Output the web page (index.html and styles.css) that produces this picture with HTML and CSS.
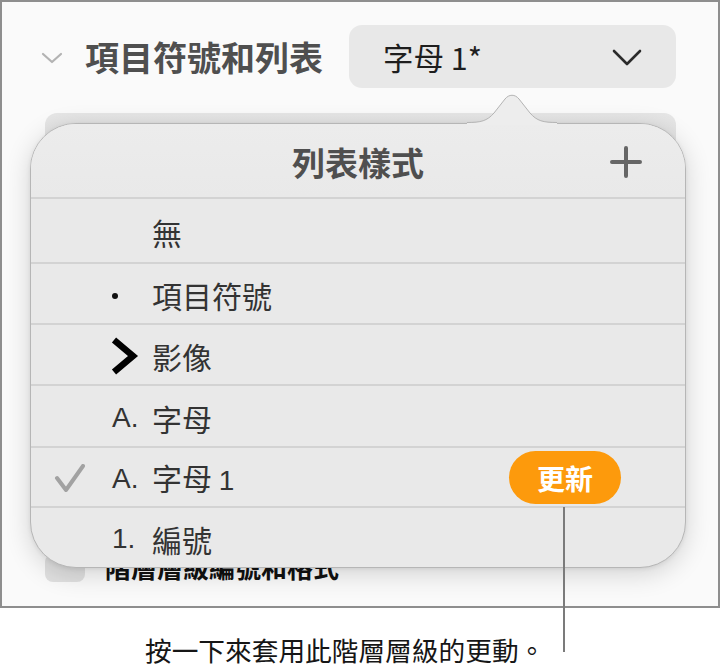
FILE: index.html
```html
<!DOCTYPE html>
<html lang="zh-Hant">
<head>
<meta charset="utf-8">
<link rel="stylesheet" href="styles.css">
</head>
<body>
<div class="frame">
  <div class="header">
    <svg class="disclosure" width="22" height="12" viewBox="0 0 22 12"><path d="M2 2 L11 10 L20 2" fill="none" stroke="#b3b3b3" stroke-width="2.2" stroke-linecap="round" stroke-linejoin="round"/></svg>
    <div class="title">項目符號和列表</div>
    <div class="popup-btn">
      <span class="popup-text">字母 1*</span>
      <svg class="popup-chev" width="30" height="18" viewBox="0 0 30 18"><path d="M2 2 L15 15 L28 2" fill="none" stroke="#2b2b2b" stroke-width="2.6" stroke-linecap="round" stroke-linejoin="round"/></svg>
    </div>
  </div>
  <div class="field"></div>
  <div class="check-row">
    <div class="checkbox"></div>
    <div class="check-label">階層層級編號和格式</div>
  </div>

  <div class="pop-wrap">
    <svg class="arrow" width="90" height="32" viewBox="0 0 90 32">
      <path d="M0 29.5 C14 29.5 20 28 27 20 L38 6 C42 1 48 1 52 6 L63 20 C70 28 76 29.5 90 29.5 L90 32 L0 32 Z" fill="#ededed"/>
      <path d="M0 29.5 C14 29.5 20 28 27 20 L38 6 C42 1 48 1 52 6 L63 20 C70 28 76 29.5 90 29.5" fill="none" stroke="#b4b4b4" stroke-width="1"/>
    </svg>
    <div class="popover">
      <div class="pop-head">
        <div class="pop-title">列表樣式</div>
        <svg class="plus" width="32" height="32" viewBox="0 0 32 32"><path d="M16 2 V30 M2 16 H30" stroke="#666" stroke-width="4" stroke-linecap="round"/></svg>
      </div>
      <div class="row r1"><span class="check"></span><span class="marker"></span><span class="label">無</span></div>
      <div class="row r2"><span class="check"></span><span class="marker"><span class="dot"></span></span><span class="label">項目符號</span></div>
      <div class="row r3"><span class="check"></span><span class="marker"><svg width="28" height="38" viewBox="0 0 28 38"><path d="M3 3 L22 19 L3 35" fill="none" stroke="#000" stroke-width="6.5" stroke-linejoin="miter"/></svg></span><span class="label">影像</span></div>
      <div class="row r4"><span class="check"></span><span class="marker latin">A.</span><span class="label">字母</span></div>
      <div class="row r5"><span class="check"><svg width="32" height="30" viewBox="0 0 32 30"><path d="M3 14 L12 26 L29 2" fill="none" stroke="#a2a2a2" stroke-width="4" stroke-linecap="round" stroke-linejoin="round"/></svg></span><span class="marker latin">A.</span><span class="label">字母 <span class="latin">1</span></span><span class="badge">更新</span></div>
      <div class="row r6"><span class="check"></span><span class="marker latin">1.</span><span class="label">編號</span></div>
    </div>
  </div>
</div>
<div class="caption">按一下來套用此階層層級的更動。</div>
<div class="callout-line"></div>
</body>
</html>
```
FILE: styles.css
```css
* { box-sizing: border-box; }
html, body { margin: 0; padding: 0; background: #ffffff; }
body {
  position: relative;
  width: 721px;
  height: 670px;
  overflow: hidden;
  font-family: "Noto Sans CJK TC", "Noto Sans", sans-serif;
}
.frame {
  position: relative;
  width: 720px;
  height: 608px;
  border: 2px solid #8e8e8e;
  background: #fafafa;
}
.header {
  display: flex;
  align-items: center;
  padding: 23px 42px 0 39px;
}
.disclosure { flex: none; margin-top: 2px; }
.title {
  margin-left: 22px;
  font-size: 34px;
  font-weight: 700;
  color: #4f4f4f;
  line-height: 40px;
}
.popup-btn {
  margin-left: auto;
  width: 327px;
  height: 63px;
  border-radius: 13px;
  background: #e8e8e8;
  display: flex;
  align-items: center;
  padding: 0 34px 0 34px;
}
.popup-text {
  font-size: 30.5px;
  color: #1e1e1e;
  line-height: 36px;
}
.popup-chev { margin-left: auto; margin-top: 2px; }
.field {
  margin: 25px 42px 0 43px;
  height: 60px;
  border-radius: 12px;
  background: linear-gradient(#e6e6e6, #dedede);
}
.check-row {
  display: flex;
  align-items: center;
  margin: 381px 0 0 43px;
  height: 28px;
  gap: 20px;
}
.checkbox {
  width: 40px;
  height: 28px;
  border-radius: 8px;
  background: #e0e0e0;
}
.check-label {
  font-size: 26px;
  font-weight: 700;
  color: #111;
  line-height: 28px;
  margin-top: -3px;
}
.pop-wrap {
  position: absolute;
  left: 28px;
  top: 121px;
  width: 656px;
  height: 445px;
}
.arrow {
  position: absolute;
  left: 437px;
  top: -30px;
  z-index: 2;
}
.popover {
  width: 656px;
  height: 445px;
  border: 1px solid #b6b6b6;
  border-radius: 46px;
  background: #e9e9e9;
  overflow: hidden;
  box-shadow: 0 6px 26px rgba(0, 0, 0, 0.16), 0 1px 4px rgba(0, 0, 0, 0.08);
}
.pop-head {
  position: relative;
  height: 73px;
  display: flex;
  align-items: center;
  justify-content: center;
  background: linear-gradient(#ececec, #e9e9e9);
}
.pop-title {
  font-size: 33px;
  font-weight: 700;
  color: #4f4f4f;
  line-height: 40px;
  margin-top: 3px;
}
.plus {
  position: absolute;
  right: 43px;
  top: 22px;
}
.row {
  display: flex;
  align-items: center;
  border-top: 2px solid #d3d3d3;
  padding-top: 3px;
  color: #333;
}
.r1 { height: 65px; }
.r2 { height: 61px; }
.r3 { height: 61px; }
.r4 { height: 62px; }
.r5 { height: 60px; }
.r6 { height: 61px; }
.check {
  flex: none;
  width: 80px;
  padding-left: 23px;
  display: flex;
  align-items: center;
}
.marker {
  flex: none;
  width: 41px;
  display: flex;
  align-items: center;
  font-size: 28px;
  line-height: 34px;
}
.latin { font-family: "Liberation Sans", "Noto Sans CJK TC", sans-serif; }
.marker.latin { padding-left: 1px; }
.dot {
  display: block;
  width: 6px;
  height: 6px;
  border-radius: 50%;
  background: #111;
  margin-left: 1px;
  margin-top: 2px;
}
.label {
  font-size: 30px;
  line-height: 36px;
}
.label .latin { font-size: 28px; }
.badge {
  margin-left: auto;
  margin-right: 64px;
  width: 112px;
  height: 53px;
  border-radius: 27px;
  background: #fd9a0c;
  color: #fff;
  font-size: 28px;
  font-weight: 700;
  display: flex;
  align-items: center;
  justify-content: center;
  margin-top: -2px;
}
.caption {
  margin-top: 24px;
  padding-left: 145px;
  font-size: 26.7px;
  line-height: 36px;
  color: #161616;
}
.callout-line {
  position: absolute;
  left: 563px;
  top: 507px;
  width: 2px;
  height: 145px;
  background: #7b7b7b;
}
```
